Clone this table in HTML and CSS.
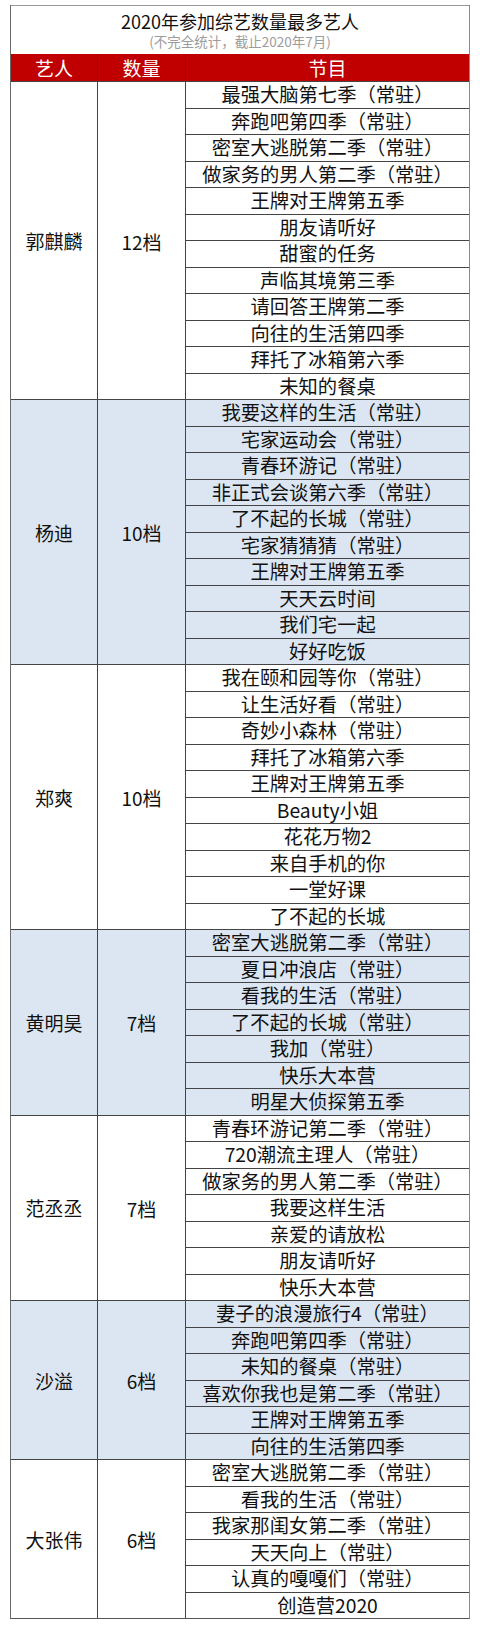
FILE: index.html
```html
<!DOCTYPE html>
<html lang="zh-CN">
<head>
<meta charset="utf-8">
<title>2020年参加综艺数量最多艺人</title>
<link rel="stylesheet" href="styles.css">
</head>
<body>
<div class="sheet">
  <div class="title">
    <div class="main">2020年参加综艺数量最多艺人</div>
    <div class="sub">(不完全统计，截止2020年7月)</div>
  </div>
  <div class="head">
    <div class="hc">艺人</div>
    <div class="hc">数量</div>
    <div class="hc last">节目</div>
  </div>

  <div class="group">
    <div class="name">郭麒麟</div>
    <div class="count">12档</div>
    <div class="progs">
      <div class="p">最强大脑第七季（常驻）</div>
      <div class="p">奔跑吧第四季（常驻）</div>
      <div class="p">密室大逃脱第二季（常驻）</div>
      <div class="p">做家务的男人第二季（常驻）</div>
      <div class="p">王牌对王牌第五季</div>
      <div class="p">朋友请听好</div>
      <div class="p">甜蜜的任务</div>
      <div class="p">声临其境第三季</div>
      <div class="p">请回答王牌第二季</div>
      <div class="p">向往的生活第四季</div>
      <div class="p">拜托了冰箱第六季</div>
      <div class="p">未知的餐桌</div>
    </div>
  </div>

  <div class="group blue">
    <div class="name">杨迪</div>
    <div class="count">10档</div>
    <div class="progs">
      <div class="p">我要这样的生活（常驻）</div>
      <div class="p">宅家运动会（常驻）</div>
      <div class="p">青春环游记（常驻）</div>
      <div class="p">非正式会谈第六季（常驻）</div>
      <div class="p">了不起的长城（常驻）</div>
      <div class="p">宅家猜猜猜（常驻）</div>
      <div class="p">王牌对王牌第五季</div>
      <div class="p">天天云时间</div>
      <div class="p">我们宅一起</div>
      <div class="p">好好吃饭</div>
    </div>
  </div>

  <div class="group">
    <div class="name">郑爽</div>
    <div class="count">10档</div>
    <div class="progs">
      <div class="p">我在颐和园等你（常驻）</div>
      <div class="p">让生活好看（常驻）</div>
      <div class="p">奇妙小森林（常驻）</div>
      <div class="p">拜托了冰箱第六季</div>
      <div class="p">王牌对王牌第五季</div>
      <div class="p">Beauty小姐</div>
      <div class="p">花花万物2</div>
      <div class="p">来自手机的你</div>
      <div class="p">一堂好课</div>
      <div class="p">了不起的长城</div>
    </div>
  </div>

  <div class="group blue">
    <div class="name">黄明昊</div>
    <div class="count">7档</div>
    <div class="progs">
      <div class="p">密室大逃脱第二季（常驻）</div>
      <div class="p">夏日冲浪店（常驻）</div>
      <div class="p">看我的生活（常驻）</div>
      <div class="p">了不起的长城（常驻）</div>
      <div class="p">我加（常驻）</div>
      <div class="p">快乐大本营</div>
      <div class="p">明星大侦探第五季</div>
    </div>
  </div>

  <div class="group">
    <div class="name">范丞丞</div>
    <div class="count">7档</div>
    <div class="progs">
      <div class="p">青春环游记第二季（常驻）</div>
      <div class="p">720潮流主理人（常驻）</div>
      <div class="p">做家务的男人第二季（常驻）</div>
      <div class="p">我要这样生活</div>
      <div class="p">亲爱的请放松</div>
      <div class="p">朋友请听好</div>
      <div class="p">快乐大本营</div>
    </div>
  </div>

  <div class="group blue">
    <div class="name">沙溢</div>
    <div class="count">6档</div>
    <div class="progs">
      <div class="p">妻子的浪漫旅行4（常驻）</div>
      <div class="p">奔跑吧第四季（常驻）</div>
      <div class="p">未知的餐桌（常驻）</div>
      <div class="p">喜欢你我也是第二季（常驻）</div>
      <div class="p">王牌对王牌第五季</div>
      <div class="p">向往的生活第四季</div>
    </div>
  </div>

  <div class="group">
    <div class="name">大张伟</div>
    <div class="count">6档</div>
    <div class="progs">
      <div class="p">密室大逃脱第二季（常驻）</div>
      <div class="p">看我的生活（常驻）</div>
      <div class="p">我家那闺女第二季（常驻）</div>
      <div class="p">天天向上（常驻）</div>
      <div class="p">认真的嘎嘎们（常驻）</div>
      <div class="p">创造营2020</div>
    </div>
  </div>
</div>
</body>
</html>
```

FILE: styles.css
```css
html, body {
  margin: 0;
  padding: 0;
  background: #ffffff;
}

body {
  font-family: "Noto Sans CJK SC", "Noto Sans", sans-serif;
  color: #111111;
}

.sheet {
  width: 460px;
  margin: 5px 0 0 10px;
  border-left: 1px solid #6a6a6a;
  border-right: 1px solid #8a8a8a;
  border-bottom: 1px solid #555555;
  box-sizing: border-box;
}

.title {
  height: 49px;
  border-top: 1px solid #9a9a9a;
  box-sizing: border-box;
  display: flex;
  flex-direction: column;
  align-items: center;
}

.title .main {
  font-size: 18px;
  line-height: 22px;
  margin-top: 4px;
  color: #111;
}

.title .sub {
  font-size: 13.5px;
  line-height: 18px;
  color: #9c9c9c;
  margin-top: 0;
}

.head {
  display: grid;
  grid-template-columns: 87px 88px 1fr;
  height: 27px;
  background: #c00000;
  color: #ffffff;
}

.hc {
  font-size: 19px;
  line-height: 27px;
  text-align: center;
  border-right: 1px solid #a80000;
}

.hc.last {
  border-right: none;
}

.group {
  display: grid;
  grid-template-columns: 87px 88px 1fr;
}

.group.blue {
  background: #dce6f2;
}

.name,
.count {
  display: flex;
  align-items: center;
  justify-content: center;
  font-size: 19px;
  border-top: 1px solid #444444;
  border-right: 1px solid #444444;
}

.count {
  padding-top: 1px;
}

.progs {
  display: flex;
  flex-direction: column;
}

.p {
  height: 26.5px;
  box-sizing: border-box;
  border-top: 1px solid #444444;
  font-size: 19.3px;
  line-height: 25px;
  text-align: center;
  white-space: nowrap;
}
```
